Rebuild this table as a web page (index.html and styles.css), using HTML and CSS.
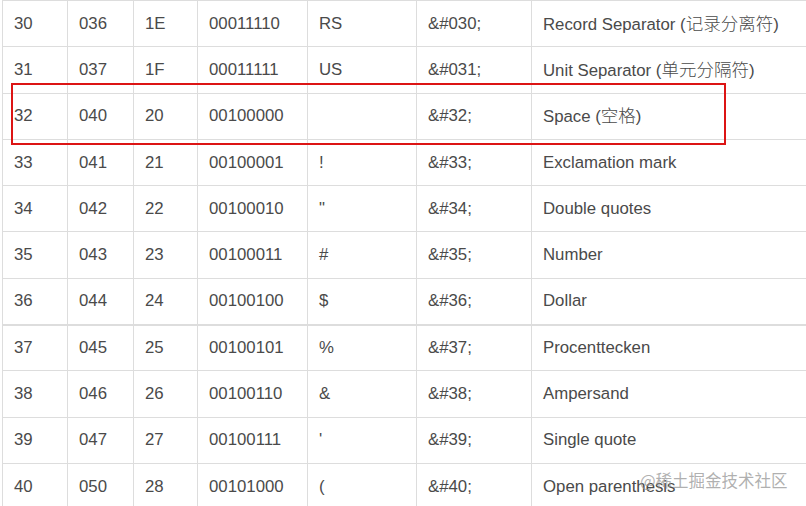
FILE: index.html
```html
<!DOCTYPE html>
<html lang="zh">
<head>
<meta charset="utf-8">
<title>ASCII</title>
<link rel="stylesheet" href="styles.css">
</head>
<body>
<div class="page">
<table class="ascii">
<colgroup>
<col class="c1"><col class="c2"><col class="c3"><col class="c4"><col class="c5"><col class="c6"><col class="c7">
</colgroup>
<tbody>
<tr><td>30</td><td>036</td><td>1E</td><td>00011110</td><td>RS</td><td>&amp;#030;</td><td>Record Separator (<span class="cjk">记录分离符</span>)</td></tr>
<tr><td>31</td><td>037</td><td>1F</td><td>00011111</td><td>US</td><td>&amp;#031;</td><td>Unit Separator (<span class="cjk">单元分隔符</span>)</td></tr>
<tr><td>32</td><td>040</td><td>20</td><td>00100000</td><td></td><td>&amp;#32;</td><td>Space (<span class="cjk">空格</span>)</td></tr>
<tr><td>33</td><td>041</td><td>21</td><td>00100001</td><td>!</td><td>&amp;#33;</td><td>Exclamation mark</td></tr>
<tr><td>34</td><td>042</td><td>22</td><td>00100010</td><td>"</td><td>&amp;#34;</td><td>Double quotes</td></tr>
<tr><td>35</td><td>043</td><td>23</td><td>00100011</td><td>#</td><td>&amp;#35;</td><td>Number</td></tr>
<tr class="thick"><td>36</td><td>044</td><td>24</td><td>00100100</td><td>$</td><td>&amp;#36;</td><td>Dollar</td></tr>
<tr><td>37</td><td>045</td><td>25</td><td>00100101</td><td>%</td><td>&amp;#37;</td><td>Procenttecken</td></tr>
<tr><td>38</td><td>046</td><td>26</td><td>00100110</td><td>&amp;</td><td>&amp;#38;</td><td>Ampersand</td></tr>
<tr><td>39</td><td>047</td><td>27</td><td>00100111</td><td>'</td><td>&amp;#39;</td><td>Single quote</td></tr>
<tr><td>40</td><td>050</td><td>28</td><td>00101000</td><td>(</td><td>&amp;#40;</td><td>Open parenthesis</td></tr>
</tbody>
</table>
<div class="highlight"></div>
<div class="watermark">@稀土掘金技术社区</div>
</div>
</body>
</html>
```

FILE: styles.css
```css
html, body {
  margin: 0;
  padding: 0;
  background: #ffffff;
  overflow: hidden;
}
.page {
  position: relative;
  width: 806px;
  height: 506px;
  overflow: hidden;
  padding-left: 2px;
  box-sizing: border-box;
}
.ascii {
  border-collapse: collapse;
  table-layout: fixed;
  width: 960px;
  font-family: "Liberation Sans", Arial, "Noto Sans CJK SC", sans-serif;
  font-size: 16.8px;
  color: #4a4a4a;
}
.cjk {
  font-family: "Noto Sans CJK SC", sans-serif;
  font-size: 17.5px;
  font-weight: 300;
}
.c1 { width: 65px; }
.c2 { width: 66px; }
.c3 { width: 64px; }
.c4 { width: 110px; }
.c5 { width: 109px; }
.c6 { width: 115px; }
.c7 { width: 431px; }
.ascii td {
  border: 1px solid #dddddd;
  height: 46.3px;
  box-sizing: border-box;
  padding: 0 11px;
  vertical-align: middle;
  white-space: nowrap;
  line-height: 20px;
}
.ascii tr.thick td {
  border-bottom: 2px solid #dddddd;
}
.highlight {
  position: absolute;
  left: 11px;
  top: 83px;
  width: 715px;
  height: 62px;
  box-sizing: border-box;
  border: 2px solid #dc1414;
}
.watermark {
  position: absolute;
  left: 640px;
  top: 469px;
  font-family: "Noto Sans CJK SC", sans-serif;
  font-size: 16.5px;
  line-height: 22px;
  color: rgba(150, 150, 150, 0.75);
  white-space: nowrap;
}
```
